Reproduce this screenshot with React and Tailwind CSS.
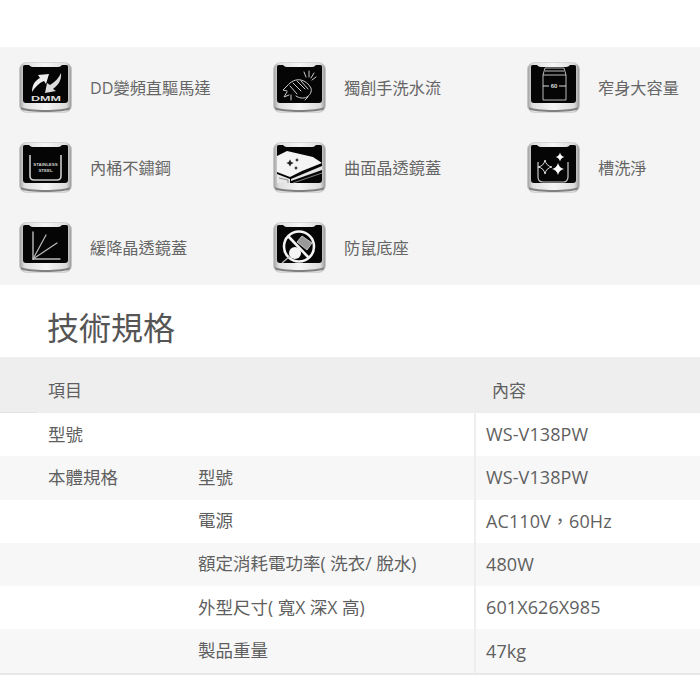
const features = [
  { label: 'DD變頻直驅馬達', icon: 'dd' },
  { label: '獨創手洗水流', icon: 'hand' },
  { label: '窄身大容量', icon: 'slim' },
  { label: '內桶不鏽鋼', icon: 'steel' },
  { label: '曲面晶透鏡蓋', icon: 'lid' },
  { label: '槽洗淨', icon: 'clean' },
  { label: '緩降晶透鏡蓋', icon: 'soft' },
  { label: '防鼠底座', icon: 'mouse' },
];

const rows = [
  ['型號', '', 'WS-V138PW'],
  ['本體規格', '型號', 'WS-V138PW'],
  ['', '電源', 'AC110V，60Hz'],
  ['', '額定消耗電功率( 洗衣/ 脫水)', '480W'],
  ['', '外型尺寸( 寬X 深X 高)', '601X626X985'],
  ['', '製品重量', '47kg'],
];

function Sparkle({ x, y, r, fill = '#eee' }) {
  return (
    <path
      d={`M${x} ${y - r}Q${x + r * 0.2} ${y - r * 0.2} ${x + r} ${y}Q${x + r * 0.2} ${y + r * 0.2} ${x} ${y + r}Q${x - r * 0.2} ${y + r * 0.2} ${x - r} ${y}Q${x - r * 0.2} ${y - r * 0.2} ${x} ${y - r}Z`}
      fill={fill}
    />
  );
}

function Glyph({ name }) {
  if (name === 'dd') {
    return (
      <g>
        <path d="M13 30C13 22 17 18 21 16L19 13L30 12L27 22L25 19C20 21 16 25 13 30Z" fill="#eee" />
        <path d="M42 11C43 19 38 24 34 27L37 29L26 31L28 21L31 23C36 20 40 16 42 11Z" fill="#ddd" />
        <text x="27" y="38.5" textAnchor="middle" fontSize="6.5" fontWeight="700" fill="#ddd" fontFamily="Liberation Sans, sans-serif" textLength="30" lengthAdjust="spacingAndGlyphs">DMM</text>
      </g>
    );
  }
  if (name === 'hand') {
    return (
      <g fill="none" stroke="#ccc" strokeWidth="1" strokeLinecap="round" strokeLinejoin="round">
        <path d="M31 10L33 15M36 9L36 15M41 11L38 16M43 15L39 18" />
        <path d="M14 24C18 19 23 17 28 18C32 19 36 22 38 26C39 30 37 33 34 35C30 37 26 36 23 34" />
        <path d="M20 21L28 29M24 19L32 27M28 19L35 27M17 24L24 32" />
        <path d="M14 24L10 28L14 29M14 30L11 35L16 33M18 33L18 38M35 35L32 38" />
      </g>
    );
  }
  if (name === 'slim') {
    return (
      <g fill="none" stroke="#bbb" strokeWidth="1">
        <path d="M18 6H37L39 13V38H16V13Z" />
        <path d="M16 13H39M18 9H37" />
        <path d="M16 24H22M32 24H39" stroke="#ddd" />
        <text x="27" y="26" textAnchor="middle" fontSize="6" fontWeight="700" fill="#ddd" stroke="none" fontFamily="Liberation Sans, sans-serif">60</text>
      </g>
    );
  }
  if (name === 'steel') {
    return (
      <g>
        <path d="M11 13V34C11 37 13 38 15 38H38C40 38 42 37 42 34V13" fill="none" stroke="#ccc" strokeWidth="1.6" />
        <text x="26.5" y="24" textAnchor="middle" fontSize="4.4" fontWeight="700" fill="#ccc" fontFamily="Liberation Sans, sans-serif">STAINLESS</text>
        <text x="26.5" y="30" textAnchor="middle" fontSize="4.4" fontWeight="700" fill="#ccc" fontFamily="Liberation Sans, sans-serif">STEEL</text>
      </g>
    );
  }
  if (name === 'lid') {
    return (
      <g>
        <path d="M4 14L14 9L40 15L49 21L29 29L17 35L4 30Z" fill="#f4f4f4" />
        <path d="M49 24L18 37V39L49 28Z" fill="#e4e4e4" />
        <path d="M4 32L17 37V41H4Z" fill="#e8e8e8" />
        <path d="M6 36L15 38V41" fill="none" stroke="#777" strokeWidth="0.8" />
        <path d="M20 41L49 31" stroke="#999" strokeWidth="0.8" />
        <Sparkle x={17} y={21} r={3.6} fill="#222" />
        <Sparkle x={24} y={18} r={1.9} fill="#222" />
        <Sparkle x={23} y={26} r={1.9} fill="#222" />
      </g>
    );
  }
  if (name === 'clean') {
    return (
      <g>
        <path d="M11 20V35C11 38 13 40 16 40H37C39 40 41 38 41 35V20" fill="none" stroke="#ccc" strokeWidth="1.2" />
        <path d="M18 18Q19 24 25 25Q19 26 18 32Q17 26 11 25Q17 24 18 18Z" fill="none" stroke="#ddd" strokeWidth="1" />
        <Sparkle x={33} y={15} r={4.5} fill="#fff" />
        <Sparkle x={31} y={27} r={6} fill="#fff" />
      </g>
    );
  }
  if (name === 'soft') {
    return (
      <g stroke="#bbb" strokeLinecap="round" fill="none">
        <path d="M14 10V37" strokeWidth="1.4" />
        <path d="M14 37H41" strokeWidth="1.4" />
        <path d="M14 37L27 13" strokeWidth="1.2" />
        <path d="M14 37L38 21" strokeWidth="1.2" />
      </g>
    );
  }
  return (
    <g>
      <path d="M29 14L39 21L34 28L24 20Z" fill="#999" stroke="#ddd" strokeWidth="0.8" />
      <circle cx="22" cy="31" r="6" fill="#f4f4f4" />
      <circle cx="26" cy="24.5" r="15" fill="none" stroke="#f4f4f4" strokeWidth="2.6" />
      <path d="M15 14L36 36" stroke="#f4f4f4" strokeWidth="2.6" />
      <path d="M9 41L16 35" stroke="#bbb" strokeWidth="1.2" />
    </g>
  );
}

function FeatureIcon({ name }) {
  const gid = `frame-${name}`;
  return (
    <svg width="53" height="51" viewBox="0 0 53 51" className="shrink-0">
      <defs>
        <linearGradient id={gid} x1="0" y1="0" x2="1" y2="0">
          <stop offset="0" stopColor="#a0a0a0" />
          <stop offset="0.1" stopColor="#dedede" />
          <stop offset="0.5" stopColor="#f5f5f5" />
          <stop offset="0.9" stopColor="#dcdcdc" />
          <stop offset="1" stopColor="#969696" />
        </linearGradient>
      </defs>
      <rect x="0.5" y="0.5" width="52" height="50" rx="7" fill={`url(#${gid})`} stroke="#c4c4c4" strokeWidth="0.6" />
      <path d="M2 45C8 49 45 49 51 45V47C47 51 6 51 2 47Z" fill="#808080" />
      <path d="M6 3C4 3 4 4 4 6V38C4 40 5 41 7 41H46C48 41 49 40 49 38V6C49 4 49 3 47 3H43C41 5 40 5 38 5H15C13 5 12 5 10 3Z" fill="#050505" />
      <Glyph name={name} />
    </svg>
  );
}

export default function App() {
  return (
    <div className="w-[700px] h-[700px] overflow-hidden bg-white pt-[47px] text-[#5f5f5f] font-['Open_Sans','Noto_Sans_CJK_TC',sans-serif]">
      <div className="grid grid-cols-[254px_254px_1fr] gap-y-[29px] bg-[#f4f4f4] pl-[19px] pt-[15px] pb-[12px]">
        {features.map((f) => (
          <div key={f.label} className="flex items-center gap-[18px] h-[51px]">
            <FeatureIcon name={f.icon} />
            <span className="text-[16.2px] leading-none pt-px whitespace-nowrap text-[#666]">{f.label}</span>
          </div>
        ))}
      </div>

      <h2 className="h-[72px] pl-[47px] pt-[23px] text-[32px] leading-[40px] font-normal text-[#555]">技術規格</h2>

      <div className="relative flex h-[56px] bg-[#eeeeee] text-[17px]">
        <div className="w-[492px] pl-[48px] pt-[23px] leading-[22px]">項目</div>
        <div className="pt-[23px] leading-[22px]">內容</div>
        <div className="absolute left-0 bottom-0 w-[37px] h-px bg-[#e2e2e2]" />
      </div>

      <div className="border-b-2 border-[#e8e8e8]">
        {rows.map((r, i) => (
          <div key={i} className={`flex h-[43.3px] items-center text-[17.5px] ${i % 2 === 1 ? 'bg-[#f7f7f7]' : 'bg-white'}`}>
            <div className="w-[198px] pl-[48px] pb-[2px] shrink-0">{r[0]}</div>
            <div className="w-[276px] pb-[2px] shrink-0 whitespace-nowrap">{r[1]}</div>
            <div className="self-stretch flex items-center border-l-2 border-[#eeeeee] pl-[10px] text-[18px] tracking-[0.1px]">{r[2]}</div>
          </div>
        ))}
      </div>
    </div>
  );
}
